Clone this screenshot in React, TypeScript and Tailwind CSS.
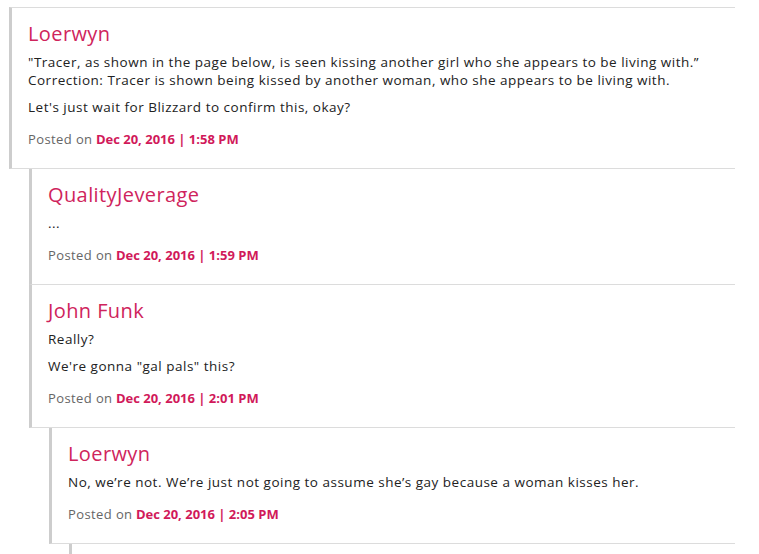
type CommentProps = {
  name: string;
  paras: React.ReactNode[];
  date: string;
  first?: boolean;
};

function Comment({ name, paras, date, first }: CommentProps) {
  return (
    <div
      className={`border-l-[3px] border-b border-l-[#cdcdcd] border-b-[#dcdcdc] pl-4 pt-[14px] pb-5 ${
        first ? "border-t border-t-[#dcdcdc]" : ""
      }`}
    >
      <h3 className="text-[20px] leading-6 tracking-[0.4px] text-[#cf245c]">{name}</h3>
      <div className="mt-[7px] space-y-[9px] text-[13.5px] leading-[18px] tracking-[0.5px] text-[#222]">
        {paras.map((p, i) => (
          <p key={i}>{p}</p>
        ))}
      </div>
      <p className="mt-[14px] text-[13px] leading-[18px] text-[#666]">
        <span className="tracking-[0.4px]">Posted on</span>{" "}
        <span className="font-bold text-[#d1195a]">{date}</span>
      </p>
    </div>
  );
}

export default function App() {
  return (
    <div className="h-[554px] w-[759px] overflow-hidden bg-white pl-[9px] pt-[7px] font-['Open_Sans',sans-serif]">
      <div className="w-[726px]">
        <Comment
          first
          name="Loerwyn"
          paras={[
            <>
              "Tracer, as shown in the page below, is seen kissing another girl who she appears to be living with.”
              <br />
              Correction: Tracer is shown being kissed by another woman, who she appears to be living with.
            </>,
            "Let's just wait for Blizzard to confirm this, okay?",
          ]}
          date="Dec 20, 2016 | 1:58 PM"
        />
        <div className="ml-5">
          <Comment name="QualityJeverage" paras={["..."]} date="Dec 20, 2016 | 1:59 PM" />
          <Comment
            name="John Funk"
            paras={["Really?", "We're gonna \"gal pals\" this?"]}
            date="Dec 20, 2016 | 2:01 PM"
          />
          <div className="ml-5">
            <Comment
              name="Loerwyn"
              paras={["No, we\u2019re not. We\u2019re just not going to assume she\u2019s gay because a woman kisses her."]}
              date="Dec 20, 2016 | 2:05 PM"
            />
            <div className="ml-5 h-16 border-l-[3px] border-l-[#cdcdcd]" />
          </div>
        </div>
      </div>
    </div>
  );
}
